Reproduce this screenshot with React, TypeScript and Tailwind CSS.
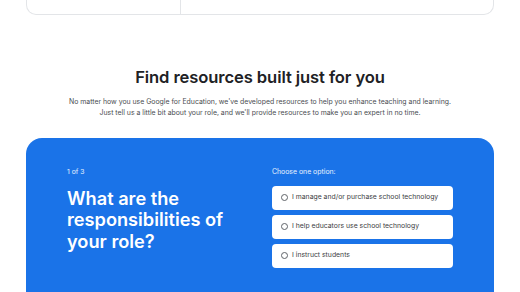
const options = [
  "I manage and/or purchase school technology",
  "I help educators use school technology",
  "I instruct students",
];

export default function App() {
  return (
    <div
      className="h-[292px] w-full overflow-hidden bg-white px-[26px]"
      style={{ fontFamily: "Inter, 'Open Sans', sans-serif" }}
    >
      {/* tail of the card above */}
      <div className="flex h-[15px] rounded-b-[10px] border border-t-0 border-[#e3e5e8]">
        <div className="w-[154px] border-r border-[#e3e5e8]" />
        <div className="flex-1" />
      </div>

      <h2 className="mt-[51px] text-center text-[16.6px] font-semibold leading-[22px] tracking-[-0.1px] text-[#202124]">
        Find resources built just for you
      </h2>
      <p className="mt-[7.5px] text-center text-[6.9px] leading-[11px] text-[#4a4d51]">
        No matter how you use Google for Education, we've developed resources to help you enhance teaching and learning.
        <br />
        Just tell us a little bit about your role, and we'll provide resources to make you an expert in no time.
      </p>

      <div className="mt-[20px] flex h-[180px] rounded-t-[16px] bg-[#1a73e8] pl-[41px] pt-[29px]">
        <div className="w-[205px]">
          <div className="text-[6.8px] leading-[10px] text-white/90">1 of 3</div>
          <h3 className="mt-[11px] w-[170px] text-[18.2px] font-semibold leading-[21.5px] text-white">
            What are the responsibilities of your role?
          </h3>
        </div>
        <div className="w-[181px]">
          <div className="text-[6.9px] leading-[10px] text-white/90">Choose one option:</div>
          <div className="mt-[9px] flex flex-col gap-[5px]">
            {options.map((o) => (
              <div
                key={o}
                className="flex h-[24px] items-center gap-[4px] rounded-[4px] bg-white pl-[9px] text-[6.85px] text-[#3c4043]"
              >
                <span className="h-[7px] w-[7px] shrink-0 rounded-full border border-[#5f6368]" />
                <span>{o}</span>
              </div>
            ))}
          </div>
        </div>
      </div>
    </div>
  );
}
